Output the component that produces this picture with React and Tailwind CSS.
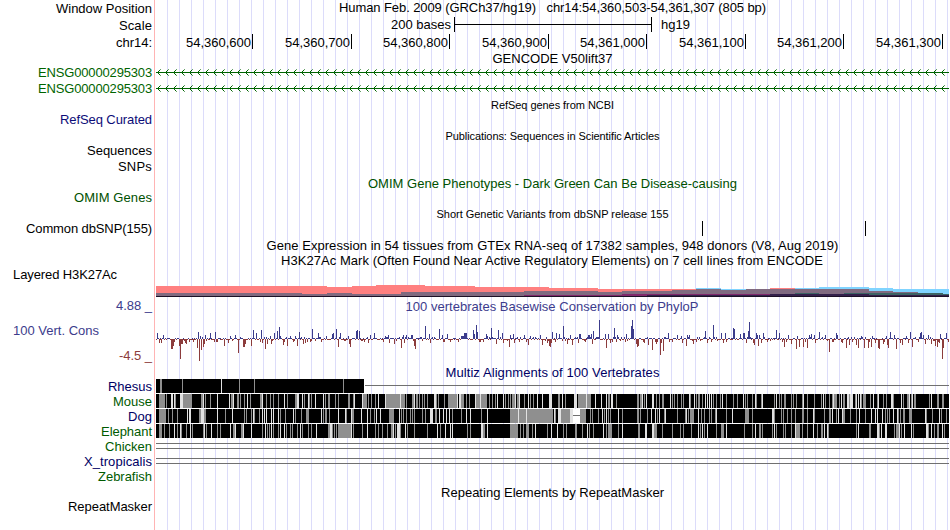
import { useLayoutEffect, useRef, useState } from "react";
import clsx from "clsx";

const START = 156; // first pixel column of the track area
const WIDTH = 793;

// [text, text width, row classes]
const LABELS = [
  ["Window Position", 96, "h-[17px] text-black"],
  ["Scale", 33, "h-[17px] text-black"],
  ["chr14:", 36, "h-[17px] text-black"],
  ["ENSG00000295303", 114, "h-[30px] text-[#006400]"],
  ["ENSG00000295303", 114, "h-[16px] text-[#006400]"],
  ["RefSeq Curated", 92, "h-[31px] text-[#0c0c78]"],
  ["Sequences", 65, "h-[31px] text-black"],
  ["SNPs", 34, "h-[16px] text-black"],
  ["OMIM Genes", 78, "h-[31px] text-[#005000]"],
  ["Common dbSNP(155)", 126, "h-[31px] text-black"],
  ["Layered H3K27Ac", 104, "h-[46px] text-black justify-start! pl-[13px]"],
  ["4.88 _", 36, "h-[31px] text-[#3c3c8c]"],
  ["100 Vert. Cons", 86, "h-[25px] text-[#3c3c8c] justify-start! pl-[13px]"],
  ["-4.5 _", 33, "h-[25px] text-[#8c3c3c]"],
  ["Rhesus", 44, "h-[31px] text-[#000064]"],
  ["Mouse", 39, "h-[15px] text-[#005a00]"],
  ["Dog", 24, "h-[15px] text-[#000064]"],
  ["Elephant", 51, "h-[15px] text-[#005a00]"],
  ["Chicken", 47, "h-[15px] text-[#005a00]"],
  ["X_tropicalis", 68, "h-[15px] text-[#000064]"],
  ["Zebrafish", 54, "h-[15px] text-[#005a00]"],
  ["RepeatMasker", 84, "h-[30px] text-black"],
];

const RULER = [
  ["54,360,600", "w-[97px]"],
  ["54,360,700", "w-[99px]"],
  ["54,360,800", "w-[98px]"],
  ["54,360,900", "w-[99px]"],
  ["54,361,000", "w-[98px]"],
  ["54,361,100", "w-[99px]"],
  ["54,361,200", "w-[98px]"],
  ["54,361,300", "w-[99px]"],
];

// Histone mark steps, x:top of each step; a step lasts until the next one
const HISTONE = [
  { color: "#80d4ff", steps: "696:288 721:289 746:296 795:288 819:287 869:288 893:289" },
  { color: "#ff8080", steps: "156:286 327:287 352:286 376:285 425:286 475:287 549:288 598:289 696:296 770:288 795:296" },
  { color: "#806a80", steps: "156:293 302:294 327:293 352:294 401:292 524:291 598:292 622:291 672:290 696:289 721:290 746:289 869:291 893:292 918:293 943:296" },
  { color: "#3c6464", steps: "795:293 819:296 844:293 943:294" },
  { color: "#80286c", steps: "524:295 622:294 770:296" },
  { color: "#33204a", steps: "647:295 770:294 869:295" },
  { color: "#1c1026", steps: "156:296" },
];

// Conservation peaks, x:height
const UP =
  "157:6 163:4 198:7 200:3 205:4 210:6 215:7 230:3 235:4 253:9 256:6 261:9 270:3 274:6 277:8 279:12 280:3 290:3 295:3 299:7 312:10 318:6 326:3 332:5 333:6 336:10 340:6 348:3 356:8 357:9 359:8 370:4 374:6 385:3 388:4 403:4 406:4 411:4 412:4 " +
  "425:13 429:5 439:10 442:4 447:5 461:3 462:3 463:3 464:6 465:6 466:6 473:9 474:5 476:14 477:7 486:5 487:3 491:11 498:9 502:6 510:4 513:5 524:4 530:3 540:4 552:7 556:6 559:5 563:13 570:4 579:5 580:5 588:4 589:4 591:5 593:8 599:19 605:5 608:5 614:11 617:4 626:5 631:13 632:19 633:10 668:6 677:4 687:4 " +
  "681:3 689:4 705:8 713:14 721:6 725:6 733:11 734:10 740:5 743:6 744:6 748:8 749:17 756:6 757:4 759:4 763:6 776:9 779:6 788:4 797:3 809:4 811:5 814:4 819:7 825:4 836:6 837:4 861:3 872:3 886:3 890:7 894:4 906:3 910:7 920:6 921:7 923:4 928:4 940:5 946:6";
const DOWN =
  "159:4 161:4 171:10 172:10 173:7 174:3 179:7 180:20 181:5 182:5 185:4 186:5 197:9 199:22 201:11 203:8 204:5 216:3 224:7 228:4 238:14 243:8 244:8 245:5 251:7 262:4 265:10 267:5 271:5 283:6 287:7 297:7 303:5 305:4 307:3 338:8 349:5 350:8 364:3 368:4 383:3 389:4 394:5 401:9 404:4 414:7 415:10 " +
  "430:4 443:3 479:3 480:3 496:5 503:4 509:8 514:4 528:6 542:6 547:4 549:7 550:8 551:4 567:5 572:6 578:4 585:3 592:5 606:9 610:4 625:3 636:5 637:8 638:7 644:4 648:6 652:11 656:5 660:16 661:4 663:12 672:3 682:4 " +
  "686:7 693:5 707:4 711:3 723:4 746:4 753:4 754:6 758:7 761:4 767:3 784:8 786:3 791:5 796:10 799:8 803:8 805:3 807:9 815:4 829:13 832:3 842:4 846:9 849:6 856:6 858:9 864:9 868:9 871:8 875:4 878:9 879:10 883:5 887:6 888:9 896:10 900:4 902:6 908:4 912:8 918:3 925:5 931:5 935:7 937:8 939:4 942:20 943:9";

// Weaker columns of each alignment: x, shade (g gray, l light, w white), width
const SPECIES = {
  Rhesus: "160g2 182g1 221l1 239g1 254g1 343g1",
  Mouse:
    "159g6 166g1 171l2 174l1 175g1 180l3 183g9 201g2 203l1 205g1 210g1 217l1 229l1 231g2 233l1 237g2 240g1 244g1 247l1 250g1 260g2 262l1 266g1 270g1 273g1 278g1 284l1 287g1 295g2 297l1 298l1 302l1 304g1 308l1 309g1 311g1 315l1 323l1 325g1 328g2 335g1 338g1 348g2 " +
    "353g1 354l1 362l1 363g4 368g1 371g1 375g1 378l1 385l1 386g14 400l1 401g4 406g1 412g2 414l1 416g2 419g1 422g1 424g1 427g1 434l2 436g1 438g1 444g1 448g9 457l1 459l2 461g3 466g1 469g1 475l1 476g4 480l1 481g6 489g1 492g1 495g1 497l1 503l1 505g1 508g1 510g1 512g3 515l1 517g2 519l1 524g1 528l1 530g1 533g1 537l1 542l1 549l1 " +
    "550l2 558g2 562l1 565g1 574l3 578g1 579g7 586l1 587g4 595l1 601l1 606l1 608g2 611l2 616g1 637g2 640g2 642l1 644g1 646l1 652l2 656g1 659g1 662g2 670l1 672g1 674g1 677g1 681g1 683g1 689l1 690g1 694l1 696g1 698g2 702g1 705l1 707l1 709l1 711l1 713g1 716g1 720g1 722l1 726g1 733g1 737g1 743l1 745g1 747g1 " +
    "752g1 755l1 756g1 761g1 762l1 774g1 776l1 779g1 781g1 784g2 791g1 793g1 796g1 802g1 803l1 807g1 814g1 821g1 823l1 825g1 829g1 832g1 833l1 834g3 839g1 841l1 843g2 847l2 849g1 850l3 855g1 856l1 858l1 860l1 861g1 863g3 870g1 873l1 877g1 878l1 883g1 886g1 891l2 893g1 901l1 903g1 907g2 909l1 911g1 912l1 914g2 929g1 931l1 937g2 942g2",
  Dog:
    "159g7 168g1 172g1 177g1 187l1 189l2 199g2 201l3 204g2 217l1 225g1 232l1 244g1 246g1 251g1 253l1 254g1 259g1 262l1 264l1 266l1 271l1 273l1 278l1 280g1 285g1 293l1 295g1 301g1 306g3 321l1 323g1 325g2 329g1 338l1 345l1 346g1 " +
    "351l1 352g1 353g1 361l1 367l1 370g1 374g1 376l1 380l1 389g5 399l1 401g1 403g1 406g1 410g1 412g1 414g1 422g1 425g1 430l3 435g2 439l1 443l1 446l1 449l1 452g1 461g1 466l1 470l1 481g1 487l1 510g8 518l1 519g7 526l1 527g23 " +
    "550g3 554l1 555g1 558l1 559l2 561g9 570l1 571l2 573w7 580g6 590g1 592g1 598g1 602l1 604g1 606l1 608g1 610g1 618l1 622g1 637g2 640g1 647g1 651l1 655l1 657g1 659l1 664g1 665l1 677g1 685g1 686l1 688g1 690g4 698l1 701g1 704g1 709g1 711g1 715g1 716l1 726g1 732l1 745g4 " +
    "752g1 772l2 774g1 781g1 783g1 787g1 791g1 795g1 802g2 807g1 813l1 814g1 824g1 829g2 832l1 836g1 838l1 842l1 843g2 850g1 856g1 859l1 865g1 871l1 875l1 877l1 882l1 885g1 887g1 889g1 893l1 897l1 898g1 900g1 903g2 909g3 925l1 926g1 932g1 939l1 941g1 946g1",
  Elephant:
    "159g3 164g1 169g1 174l1 177g1 180l1 181g1 186g1 190l1 192g1 203g1 204l1 206g1 211l1 217g1 220g1 230l1 233g2 235l1 241g2 243l1 251l1 262g1 265l1 267g1 269g1 271l1 273g1 278g1 280l1 284l1 286g1 290g1 292g1 297g1 300l1 302g1 308g1 311g1 316l1 328g2 330l2 332g1 334g1 336g1 338g12 " +
    "350g1 351l1 353g1 362g1 367l1 375g1 378g1 382g1 387g1 391g2 393l1 395g1 397l1 398l2 400g1 405l1 407g1 414g1 427g1 437l1 440g1 445l1 450l1 452l1 467g1 470g1 481l2 483g2 487l1 510g8 520g1 523g1 526g3 532g1 535l1 547g1 " +
    "551l1 557l1 563g1 566g1 575g2 582g1 587l1 589g1 593g1 603l1 606g1 608g4 618g1 622l1 638g2 645l2 652l2 654g3 662g1 672g1 680g1 683g1 691g1 698l1 700g1 702l1 704g1 707l1 716g1 721g3 726l1 744g1 " +
    "752g1 755l1 759g2 762g1 772g1 774l1 776g1 783g1 785g1 791g1 795l1 796g4 802g1 807g1 813l1 817g1 821g2 824l1 827l1 828g1 856g1 858l1 869g2 877l2 879g1 881l1 885l2 894g1 896g4 899l1 901g1 904l1 911l1 913g1 926l2 928g1 931l1 934g1 937g2 942l1 944g1",
};

const SHADES = { g: "#8f8f8f", l: "#e1e1e1", w: "#ffffff" };

const parsePairs = (text) => text.split(" ").map((item) => item.split(":").map(Number));

// Text spread over a fixed number of pixels
function FitText({ width, children, className }) {
  const ref = useRef(null);
  const [spacing, setSpacing] = useState(0);

  useLayoutEffect(() => {
    const natural = ref.current.getBoundingClientRect().width;
    setSpacing((width - natural) / children.length);
  }, []);

  return (
    <span ref={ref} className={clsx("inline-block whitespace-pre", className)} style={{ letterSpacing: `${spacing}px` }}>
      {children}
    </span>
  );
}

function Title({ width, className, children }) {
  return (
    <div className={clsx("flex shrink-0 items-end justify-center", className)}>
      <FitText width={width}>{children}</FitText>
    </div>
  );
}

// A drawing whose coordinates are those of the whole browser image
function Track({ top, height, className, children }) {
  return (
    <svg
      width={WIDTH}
      height={height}
      viewBox={`${START} ${top} ${WIDTH} ${height}`}
      className={clsx("block shrink-0", className)}
      shapeRendering="crispEdges"
    >
      {children}
    </svg>
  );
}

function GeneLine({ y }) {
  const tips = Array.from({ length: 99 }, (_, i) => 157 + i * 8);
  // both pixels of an arrowhead that lie n steps behind its tip
  const barbs = (n) => tips.map((x) => `M${x + n} ${y - n}h1v1h-1zM${x + n} ${y + n}h1v1h-1z`).join("");
  return (
    <g fill="#006400">
      <rect x={START} y={y} width={WIDTH} height="1" />
      <path d={barbs(1)} />
      <path d={barbs(2)} />
      <path d={barbs(3)} opacity="0.6" />
    </g>
  );
}

function Histone() {
  return (
    <Track top={269} height={30}>
      {HISTONE.map(({ color, steps }) => {
        const points = parsePairs(steps);
        return points.map(([x, y], i) => {
          const end = i + 1 < points.length ? points[i + 1][0] : START + WIDTH;
          return <rect key={color + x} x={x} y={y} width={end - x} height={297 - y} fill={color} />;
        });
      })}
    </Track>
  );
}

function Conservation() {
  const up = new Map(parsePairs(UP));
  const down = new Map(parsePairs(DOWN));
  let upPath = "";
  let downPath = "";
  for (let x = START; x < START + WIDTH; x++) {
    // low scores between the peaks
    const n = (x * 7919 + ((x * x) % 101) * 31) % 17;
    const u = up.get(x) ?? (down.has(x) || n > 8 ? 0 : n === 3 || n === 6 ? 2 : 1);
    const d = down.get(x) ?? (up.has(x) || n < 8 ? 0 : n === 11 ? 3 : n === 14 ? 2 : 1);
    if (u) upPath += `M${x} ${339 - u}h1v${u}h-1z`;
    if (d) downPath += `M${x} 339h1v${d}h-1z`;
  }
  return (
    <Track top={315} height={50}>
      <path d={upPath} fill="#3c3c8c" />
      <path d={downPath} fill="#8c3c3c" />
    </Track>
  );
}

function Stripes({ y, width = WIDTH, data }) {
  return (
    <g>
      <rect x={START} y={y} width={width} height="14" fill="#000" />
      {data.split(" ").map((item) => {
        const [, x, shade, w] = item.match(/(\d+)([glw])(\d+)/);
        return <rect key={item} x={x} y={y} width={w} height="14" fill={SHADES[shade]} />;
      })}
    </g>
  );
}

function Alignments() {
  return (
    <Track top={379} height={106} className="-mt-[2px]">
      <Stripes y={379} width={208} data={SPECIES.Rhesus} />
      <rect x="364" y="379" width="1" height="14" fill="#fff" />
      <rect x="365" y="385" width="584" height="1" fill="#707070" />
      <Stripes y={394} data={SPECIES.Mouse} />
      <Stripes y={409} data={SPECIES.Dog} />
      <rect x="573" y="415" width="7" height="1" fill="#707070" />
      <Stripes y={424} data={SPECIES.Elephant} />
      {[443, 448, 458, 463].map((y) => (
        <rect key={y} x={START} y={y} width={WIDTH} height="1" fill="#707070" />
      ))}
    </Track>
  );
}

export default function App() {
  return (
    <div className="flex h-[530px] w-[950px] overflow-hidden bg-white font-['Liberation_Sans',Arial,sans-serif] text-[13px] leading-4 text-black">
      <div className="flex w-[154px] shrink-0 flex-col">
        {LABELS.map(([text, width, className], i) => (
          <div key={i} className={clsx("flex shrink-0 items-end justify-end pr-[2px]", className)}>
            <FitText width={width}>{text}</FitText>
          </div>
        ))}
      </div>

      <div className="mr-px w-px shrink-0 bg-[#ffb4b4]" />

      <div className="flex w-[794px] shrink-0 flex-col bg-[repeating-linear-gradient(to_right,transparent_0px_11px,#dcdcfa_11px_12px)] pr-px">
        <Title width={427} className="h-[16px]">
          {"Human Feb. 2009 (GRCh37/hg19)   chr14:54,360,503-54,361,307 (805 bp)"}
        </Title>

        <div className="flex h-[17px] shrink-0 items-end pl-[235px]">
          <FitText width={60}>200 bases</FitText>
          <div className="mb-px ml-[3px] flex h-[15px] w-[198px] items-center border-x border-black">
            <div className="h-px w-full bg-black" />
          </div>
          <FitText width={29} className="ml-[9px]">hg19</FitText>
        </div>

        <div className="flex h-[18px] shrink-0 items-end">
          {RULER.map(([text, className]) => (
            <div key={text} className={clsx("flex shrink-0 items-end justify-end", className)}>
              <FitText width={65}>{text}</FitText>
              <div className="mb-[2px] ml-px h-[15px] w-px bg-black" />
            </div>
          ))}
        </div>

        <Title width={120} className="h-[16px]">GENCODE V50lift37</Title>
        <Track top={67} height={30}>
          <GeneLine y={72} />
          <GeneLine y={88} />
        </Track>

        <Title width={123} className="h-[16px] text-[11px]">RefSeq genes from NCBI</Title>
        <Title width={214} className="h-[31px] text-[11px]">Publications: Sequences in Scientific Articles</Title>
        <Title width={369} className="h-[48px] text-[#005000]">
          OMIM Gene Phenotypes - Dark Green Can Be Disease-causing
        </Title>
        <Title width={232} className="h-[30px] text-[11px]">Short Genetic Variants from dbSNP release 155</Title>
        <Track top={221} height={17} className="-mt-px">
          <rect x="702" y="221" width="1" height="15" />
          <rect x="865" y="221" width="1" height="15" />
        </Track>

        <Title width={572} className="h-[16px]">
          Gene Expression in 54 tissues from GTEx RNA-seq of 17382 samples, 948 donors (V8, Aug 2019)
        </Title>
        <Title width={542} className="h-[15px] pr-px">
          H3K27Ac Mark (Often Found Near Active Regulatory Elements) on 7 cell lines from ENCODE
        </Title>
        <Histone />

        <Title width={293} className="h-[16px] pr-px text-[#3c3c8c]">100 vertebrates Basewise Conservation by PhyloP</Title>
        <Conservation />

        <Title width={214} className="h-[16px] text-[#000064]">Multiz Alignments of 100 Vertebrates</Title>
        <Alignments />

        <Title width={223} className="h-[16px]">Repeating Elements by RepeatMasker</Title>
      </div>
    </div>
  );
}
